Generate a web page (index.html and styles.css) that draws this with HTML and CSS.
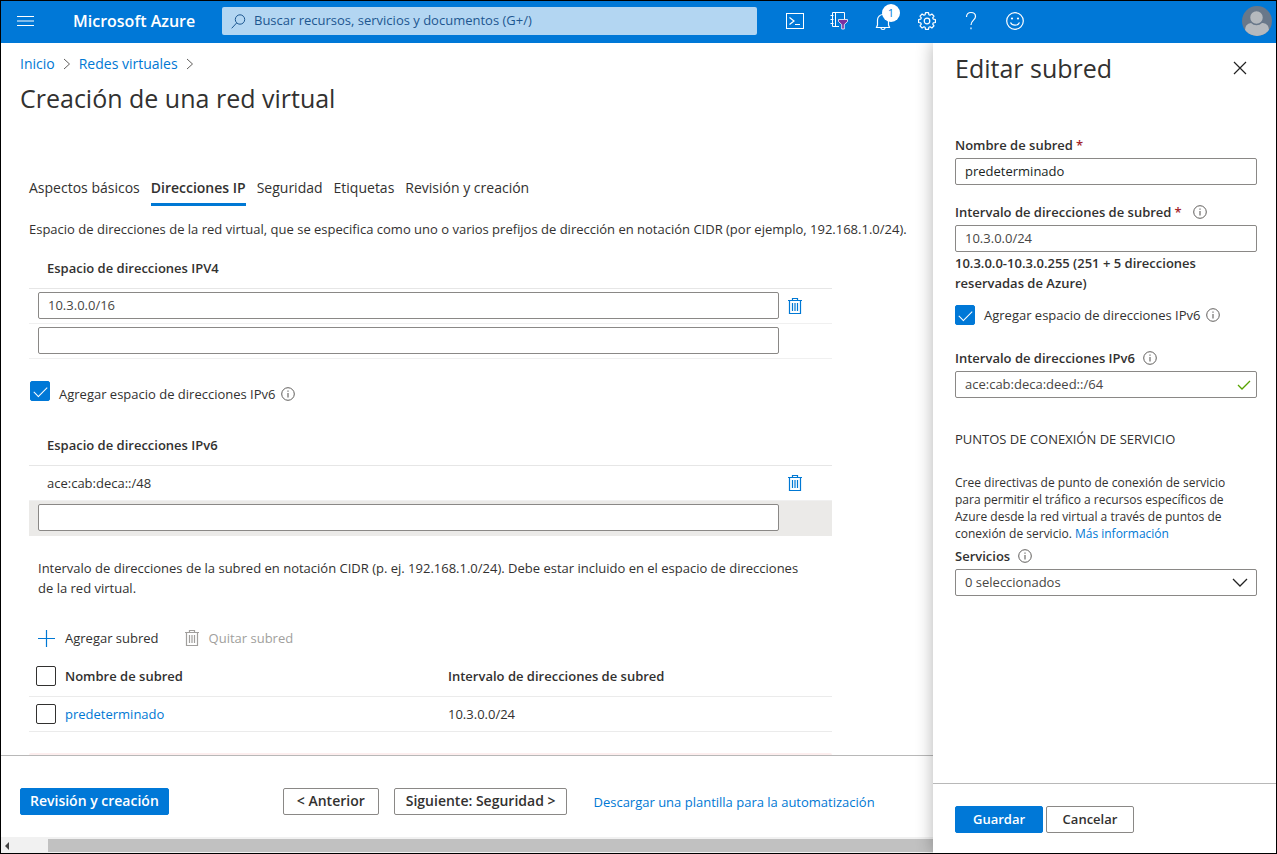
FILE: index.html
```html
<!DOCTYPE html>
<html lang="es">
<head>
<meta charset="utf-8">
<meta name="viewport" content="width=device-width, initial-scale=1">
<title>Creación de una red virtual - Microsoft Azure</title>
<link rel="stylesheet" href="styles.css">
</head>
<body>
<svg class="sprite" aria-hidden="true">
  <symbol id="trash" viewBox="0 0 14 18">
    <path d="M0 3.5h14M4.5 3V1.5h5V3M1.5 4v12.500h11V4M4.500 6v8M7 6v8M9.500 6v8" fill="none" stroke="currentColor" stroke-width="1.200"/>
  </symbol>
  <symbol id="info" viewBox="0 0 14 14">
    <circle cx="7" cy="7" r="6.300" fill="none" stroke="currentColor" stroke-width="1"/>
    <path d="M7 6v4.500M7 3.500v1.300" fill="none" stroke="currentColor" stroke-width="1.100"/>
  </symbol>
  <symbol id="chevron" viewBox="0 0 8 12">
    <path d="M1 1l5.500 5L1 11" fill="none" stroke="currentColor" stroke-width="1"/>
  </symbol>
</svg>

<header class="topbar">
  <button class="icon-btn menu-btn" type="button" aria-label="Menú">
    <svg width="17" height="12" viewBox="0 0 17 12"><path d="M0 1.500h17M0 6h17M0 10.500h17" stroke="#fff" fill="none"/></svg>
  </button>
  <a class="brand" href="#">Microsoft Azure</a>
  <div class="search">
    <svg width="15" height="15" viewBox="0 0 15 15"><circle cx="9" cy="5.500" r="4.700" fill="none" stroke="#1d5790"/><path d="M5.600 9L.7 14.300" stroke="#1d5790"/></svg>
    <input class="search-input" type="search" aria-label="Buscar" placeholder="Buscar recursos, servicios y documentos (G+/)">
  </div>
  <nav class="tools" aria-label="Herramientas">
    <button class="icon-btn" type="button" aria-label="Cloud Shell">
      <svg width="20" height="18" viewBox="0 0 20 18"><rect x="1.500" y="1.500" width="17" height="15" fill="none" stroke="#fff"/><path d="M4.500 5.500l4.500 3.500-4.500 3.500M10 12.500h5" fill="none" stroke="#fff" stroke-width="1.200"/></svg>
    </button>
    <button class="icon-btn" type="button" aria-label="Directorios">
      <svg width="20" height="20" viewBox="0 0 20 20"><path d="M10 15.500H3.500v-14h12V8M6.500 1.500v14M1.500 4.500h3M1.500 8.500h3M1.500 12.500h3" fill="none" stroke="#fff"/><path d="M9.500 8.500h9v2l-3.200 3v4.500h-2.600v-4.500l-3.200-3z" fill="#7b2fa0" stroke="#fff" stroke-width=".8"/></svg>
    </button>
    <button class="icon-btn" type="button" aria-label="Notificaciones">
      <svg width="18" height="20" viewBox="0 0 18 20"><path d="M3.500 14.500V9a5.500 5.500 0 0 1 11 0v5.500M3.500 14l-1 2.500h13l-1-2.500M7 17a2 1.500 0 0 0 4 0" fill="none" stroke="#fff" stroke-width="1.200"/></svg>
      <span class="badge">1</span>
    </button>
    <button class="icon-btn" type="button" aria-label="Configuración">
      <svg width="20" height="20" viewBox="0 0 20 20"><path d="M8.100 3.800L8.500 1.600h3l.4 2.200 1.140.470L14.880 3 17 5.120l-1.270 1.840.470 1.140 2.200.4v3l-2.200.4-.470 1.140L17 14.880 14.880 17l-1.840-1.270-1.140.470-.4 2.200h-3l-.4-2.200-1.140-.470L5.120 17 3 14.880l1.270-1.840-.470-1.140-2.200-.4v-3l2.200-.4.470-1.140L3 5.120 5.120 3l1.840 1.270z" fill="none" stroke="#fff" stroke-width="1.200" stroke-linejoin="round"/><circle cx="10" cy="10" r="2.800" fill="none" stroke="#fff" stroke-width="1.200"/></svg>
    </button>
    <button class="icon-btn" type="button" aria-label="Ayuda">
      <svg width="12" height="20" viewBox="0 0 12 20"><path d="M1.500 6C1.500 3 3.300 1.500 6 1.500S10.500 3 10.500 5.500c0 3.500-4.500 4-4.500 8.500M6 16.500v1.800" fill="none" stroke="#fff" stroke-width="1.200"/></svg>
    </button>
    <button class="icon-btn" type="button" aria-label="Comentarios">
      <svg width="20" height="20" viewBox="0 0 20 20"><circle cx="10" cy="10" r="8.300" fill="none" stroke="#fff" stroke-width="1.200"/><circle cx="7" cy="7.500" r="1.100" fill="#fff"/><circle cx="13" cy="7.500" r="1.100" fill="#fff"/><path d="M5.500 11.500c1.500 3.600 7.500 3.600 9 0" fill="none" stroke="#fff" stroke-width="1.200"/></svg>
    </button>
  </nav>
  <button class="icon-btn avatar" type="button" aria-label="Cuenta">
    <svg width="30" height="30" viewBox="0 0 30 30"><defs><clipPath id="disc"><circle cx="15" cy="15" r="15"/></clipPath></defs><g clip-path="url(#disc)"><rect width="30" height="30" fill="#69788a"/><path d="M3 30v-6q0-6 6-7h12q6 1 6 7v6z" fill="#b5b9be"/><circle cx="14.500" cy="11.500" r="7" fill="#b5b9be" stroke="#69788a" stroke-width="1.500"/></g></svg>
  </button>
</header>

<div class="workspace">
  <main class="page">
    <div class="page-scroll">
      <nav class="crumbs" aria-label="Ruta">
        <a href="#">Inicio</a><svg width="8" height="12"><use href="#chevron"/></svg>
        <a href="#">Redes virtuales</a><svg width="8" height="12"><use href="#chevron"/></svg>
      </nav>
      <h1 class="title">Creación de una red virtual</h1>

      <div class="content">
        <nav class="tabs" aria-label="Pasos">
          <a class="tab" href="#">Aspectos básicos</a>
          <a class="tab active" href="#" aria-current="step">Direcciones IP</a>
          <a class="tab" href="#">Seguridad</a>
          <a class="tab" href="#">Etiquetas</a>
          <a class="tab" href="#">Revisión y creación</a>
        </nav>
        <p class="intro">Espacio de direcciones de la red virtual, que se especifica como uno o varios prefijos de dirección en notación CIDR (por ejemplo, 192.168.1.0/24).</p>

        <section class="space">
          <h2 class="space-head">Espacio de direcciones IPV4</h2>
          <div class="space-row">
            <input class="field" type="text" value="10.3.0.0/16" aria-label="Espacio de direcciones IPV4">
            <button class="icon-btn remove" type="button" aria-label="Eliminar"><svg width="14" height="18"><use href="#trash"/></svg></button>
          </div>
          <div class="space-row">
            <input class="field" type="text" aria-label="Nuevo espacio de direcciones IPV4">
          </div>
        </section>

        <div class="check-line">
          <input class="check" type="checkbox" id="add-v6" checked>
          <label for="add-v6">Agregar espacio de direcciones IPv6</label>
          <svg class="info" width="14" height="14"><use href="#info"/></svg>
        </div>

        <section class="space">
          <h2 class="space-head">Espacio de direcciones IPv6</h2>
          <div class="space-row">
            <span class="space-value">ace:cab:deca::/48</span>
            <button class="icon-btn remove" type="button" aria-label="Eliminar"><svg width="14" height="18"><use href="#trash"/></svg></button>
          </div>
          <div class="space-row shaded">
            <input class="field" type="text" aria-label="Nuevo espacio de direcciones IPv6">
          </div>
        </section>

        <p class="hint">Intervalo de direcciones de la subred en notación CIDR (p. ej. 192.168.1.0/24). Debe estar incluido en el espacio de direcciones de la red virtual.</p>

        <div class="commands">
          <button class="command" type="button"><svg class="plus" width="17" height="17" viewBox="0 0 17 17"><path d="M8.500 0v17M0 8.500h17" stroke="#0078d4" stroke-width="1.200"/></svg>Agregar subred</button>
          <button class="command" type="button" disabled><svg width="14" height="18"><use href="#trash"/></svg>Quitar subred</button>
        </div>

        <table class="subnets">
          <thead>
            <tr>
              <th class="pick"><input class="check" type="checkbox" aria-label="Seleccionar todo"></th>
              <th class="name">Nombre de subred</th>
              <th>Intervalo de direcciones de subred</th>
            </tr>
          </thead>
          <tbody>
            <tr>
              <td class="pick"><input class="check" type="checkbox" aria-label="Seleccionar predeterminado"></td>
              <td class="name"><a href="#">predeterminado</a></td>
              <td>10.3.0.0/24</td>
            </tr>
          </tbody>
        </table>
        <div class="alert"></div>
      </div>
    </div>

    <footer class="page-foot">
      <button class="btn primary review" type="button">Revisión y creación</button>
      <button class="btn prev" type="button">&lt; Anterior</button>
      <button class="btn next" type="button">Siguiente: Seguridad &gt;</button>
      <a class="template" href="#">Descargar una plantilla para la automatización</a>
    </footer>
    <div class="hscroll" aria-hidden="true">
      <svg width="6" height="8" viewBox="0 0 6 8"><path d="M5 0v8L1 4z" fill="#404040"/></svg>
      <div class="thumb"></div>
    </div>
  </main>

  <aside class="panel" aria-labelledby="panel-title">
    <div class="panel-body">
      <div class="panel-head">
        <h2 class="title" id="panel-title">Editar subred</h2>
        <button class="icon-btn" type="button" aria-label="Cerrar"><svg width="14" height="14" viewBox="0 0 14 14"><path d="M1 1l12 12M13 1L1 13" stroke="#222" stroke-width="1.200"/></svg></button>
      </div>

      <div class="group">
        <div class="label-line"><label for="sn-name">Nombre de subred</label><span class="req">*</span></div>
        <input class="field strong" id="sn-name" type="text" value="predeterminado">
      </div>

      <div class="group range">
        <div class="label-line"><label for="sn-range">Intervalo de direcciones de subred</label><span class="req">*</span><svg class="info" width="14" height="14"><use href="#info"/></svg></div>
        <input class="field" id="sn-range" type="text" value="10.3.0.0/24">
        <p class="summary">10.3.0.0-10.3.0.255 (251 + 5 direcciones reservadas de Azure)</p>
      </div>

      <div class="check-line">
        <input class="check" type="checkbox" id="sn-v6" checked>
        <label for="sn-v6">Agregar espacio de direcciones IPv6</label>
        <svg class="info" width="14" height="14"><use href="#info"/></svg>
      </div>

      <div class="group v6">
        <div class="label-line"><label for="sn-range6">Intervalo de direcciones IPv6</label><svg class="info" width="14" height="14"><use href="#info"/></svg></div>
        <div class="adorned">
          <input class="field" id="sn-range6" type="text" value="ace:cab:deca:deed::/64">
          <svg class="adornment" width="14" height="10" viewBox="0 0 14 10"><path d="M1 5l4 4 8-8" fill="none" stroke="#57a300" stroke-width="1.300"/></svg>
        </div>
      </div>

      <h3 class="caps">PUNTOS DE CONEXIÓN DE SERVICIO</h3>
      <p class="about">Cree directivas de punto de conexión de servicio para permitir el tráfico a recursos específicos de Azure desde la red virtual a través de puntos de conexión de servicio. <a href="#">Más información</a></p>

      <div class="group services">
        <div class="label-line"><label for="sn-serv">Servicios</label><svg class="info" width="14" height="14"><use href="#info"/></svg></div>
        <div class="adorned">
          <select class="field" id="sn-serv"><option>0 seleccionados</option></select>
          <svg class="adornment" width="16" height="10" viewBox="0 0 16 10"><path d="M1 1l7 7 7-7" fill="none" stroke="#222" stroke-width="1.300"/></svg>
        </div>
      </div>
    </div>
    <footer class="panel-foot">
      <button class="btn primary" type="button">Guardar</button>
      <button class="btn" type="button">Cancelar</button>
    </footer>
  </aside>
</div>
</body>
</html>
```
FILE: styles.css
```css
* {
  box-sizing: border-box;
}

body {
  margin: 0;
  height: 100vh;
  display: flex;
  flex-direction: column;
  border: 1px solid #000;
  background: #fff;
  color: #323130;
  font: 13px/20px "Open Sans", "Noto Sans", sans-serif;
  overflow: hidden;
}

h1, h2, h3, p {
  margin: 0;
}

a {
  color: #0078d4;
  text-decoration: none;
}

button, input, select {
  font: inherit;
  color: inherit;
}

svg {
  display: block;
  flex: none;
}

.sprite {
  position: absolute;
  width: 0;
  height: 0;
}

.icon-btn {
  display: flex;
  align-items: center;
  justify-content: center;
  padding: 0;
  border: 0;
  background: none;
}

/* Top bar */
.topbar {
  display: flex;
  align-items: center;
  flex: none;
  height: 42px;
  padding: 0 4px 2px 16px;
  background: #0078d7;
  color: #fff;
}

.menu-btn {
  width: 17px;
  height: 20px;
}

.brand {
  width: 149px;
  margin-left: 39px;
  color: #fff;
  font-size: 16px;
  font-weight: 600;
  white-space: nowrap;
}

.search {
  display: flex;
  align-items: center;
  gap: 8px;
  flex: 0 1 535px;
  height: 28px;
  padding-left: 9px;
  border-radius: 2px;
  background: #b3d6f2;
}

.search-input {
  flex: 1;
  padding: 0 0 2px;
  border: 0;
  outline: 0;
  background: none;
}

.search-input::placeholder {
  color: #1d5790;
  opacity: 1;
}

.tools {
  display: flex;
  margin-left: 16px;
}

.tools .icon-btn {
  position: relative;
  width: 44px;
  height: 40px;
}

.badge {
  position: absolute;
  top: 3px;
  right: 5px;
  width: 18px;
  height: 18px;
  border-radius: 9px;
  background: #fff;
  color: #0078d7;
  font-size: 11px;
  line-height: 17px;
  text-align: center;
}

.avatar {
  margin-left: auto;
}

/* Page */
.workspace {
  display: flex;
  flex: 1;
  min-height: 0;
}

.page {
  display: flex;
  flex-direction: column;
  flex: 1;
  min-width: 0;
}

.page-scroll {
  flex: 1;
  min-height: 0;
  overflow: hidden;
  padding-top: 11px;
}

.crumbs {
  display: flex;
  align-items: center;
  gap: 8px;
  padding-left: 19px;
  font-size: 14px;
  color: #605e5c;
}

.title {
  font-size: 25px;
  line-height: 32px;
  font-weight: 500;
}

h1.title {
  margin: 8px 0 0 19px;
}

.content {
  max-width: 831px;
  padding-left: 28px;
  margin-top: 64px;
}

.tabs {
  display: flex;
  gap: 11px;
  font-size: 14px;
}

.tab {
  padding-bottom: 5px;
  border-bottom: 3px solid transparent;
  color: #323130;
  white-space: nowrap;
}

.tab.active {
  border-color: #0078d4;
  font-weight: 600;
}

.intro {
  margin-top: 13px;
  white-space: nowrap;
}

.space-head {
  padding: 0 0 10px 18px;
  border-bottom: 1px solid #e6e6e6;
  font-size: 13px;
  line-height: 20px;
  font-weight: 600;
}

.intro + .space {
  margin-top: 19px;
}

.space-row {
  display: grid;
  grid-template-columns: 1fr 32px;
  align-items: center;
  height: 35px;
  padding: 0 21px 1px 9px;
  border-bottom: 1px solid #f0f0f0;
}

.shaded {
  border-color: #ebeae8;
  background: #ebeae8;
}

.space-value {
  padding-left: 9px;
}

.field {
  display: block;
  width: 100%;
  height: 27px;
  padding: 0 9px 2px;
  border: 1px solid #8a8886;
  border-radius: 2px;
  background: #fff;
  outline: 0;
  color: #484644;
}

.field.strong {
  color: #201f1e;
}

.remove {
  color: #0078d4;
}

.check-line {
  display: flex;
  align-items: center;
}

.check-line label {
  margin: 0 5px 0 9px;
}

.content .check-line {
  align-items: flex-end;
  margin: 22px 0 31px 1px;
}

.content .check-line .check,
.content .check-line .info {
  margin-bottom: 3px;
}

.check {
  appearance: none;
  flex: none;
  display: block;
  width: 20px;
  height: 20px;
  margin: 0;
  border: 1px solid #323130;
  border-radius: 2px;
  background: #fff;
}

.check:checked {
  display: grid;
  place-items: center;
  border-color: #0078d7;
  background: #0078d7;
}

.check:checked::before {
  content: "";
  width: 12px;
  height: 6px;
  border: solid #fff;
  border-width: 0 0 1px 1px;
  transform: rotate(-45deg) translate(1px, -1px);
}

.info {
  color: #605e5c;
}

.hint {
  margin-top: 22px;
  padding: 0 18px 0 9px;
}

.commands {
  display: flex;
  gap: 26px;
  margin-top: 30px;
  padding-left: 9px;
}

.command {
  display: flex;
  align-items: center;
  gap: 10px;
  padding: 0;
  border: 0;
  background: none;
}

.command:disabled {
  color: #a19f9d;
}

.subnets {
  width: 100%;
  margin-top: 8px;
  border-collapse: collapse;
  table-layout: fixed;
  text-align: left;
}

.subnets th,
.subnets td {
  height: 35px;
  padding: 0;
  border-bottom: 1px solid #ebebeb;
}

.subnets th {
  height: 40px;
  font-weight: 600;
}

.subnets .pick {
  width: 36px;
  padding-left: 7px;
}

.subnets .name {
  width: 383px;
}

.alert {
  height: 40px;
  margin-top: 21px;
  border-radius: 2px;
  background: #fdeeee;
}

.btn {
  height: 27px;
  padding: 0 11px 2px;
  border: 1px solid #8a8886;
  border-radius: 2px;
  background: #fff;
  font-weight: 600;
  white-space: nowrap;
}

.btn.primary {
  border-color: #0078d7;
  background: #0078d7;
  color: #fff;
}

.page-foot {
  display: flex;
  align-items: center;
  flex: none;
  height: 82px;
  padding: 10px 0 0 19px;
  border-top: 1px solid #b8b8b8;
}

.page-foot .btn {
  font-size: 14px;
}

.page-foot .review {
  margin-right: 114px;
  padding: 0 9px 2px;
}

.page-foot .prev {
  padding: 0 13px 2px;
}

.next {
  margin: 0 26px 0 15px;
}

.template {
  white-space: nowrap;
}

.hscroll {
  display: flex;
  align-items: center;
  flex: none;
  gap: 38px;
  height: 16px;
  padding: 1px 0 0 3px;
  background: #f1f1f1;
}

.thumb {
  flex: 1;
  height: 13px;
  background: #c1c1c1;
}

/* Side panel */
.panel {
  display: flex;
  flex-direction: column;
  flex: 0 0 343px;
  position: relative;
  background: #fff;
  box-shadow: 0 0 16px rgba(0, 0, 0, 0.3);
  clip-path: inset(0 0 0 -20px);
}

.panel-body {
  flex: 1;
  min-height: 0;
  padding: 9px 19px 0 22px;
}

.panel-head {
  display: flex;
  align-items: center;
  justify-content: space-between;
  padding-right: 10px;
}

.group {
  margin-top: 15px;
}

.panel-head + .group {
  margin-top: 51px;
}

.label-line {
  display: flex;
  align-items: center;
  height: 20px;
  margin-bottom: 3px;
  font-weight: 600;
}

.label-line .info {
  margin-left: 8px;
}

.label-line .req {
  margin-left: 3px;
  color: #a4262c;
}

.req + .info {
  margin-left: 11px;
}

.group.range {
  margin-top: 17px;
}

.summary {
  margin-top: 1px;
  font-weight: 600;
}

.panel .check-line {
  margin-top: 12px;
}

.group.v6 {
  margin-top: 23px;
}

.adorned {
  display: grid;
  align-items: center;
}

.adorned > * {
  grid-area: 1 / 1;
}

.adornment {
  justify-self: end;
  margin-right: 6px;
  pointer-events: none;
}

select.field {
  appearance: none;
}

select + .adornment {
  margin-right: 9px;
}

.caps {
  margin-top: 31px;
  font-size: 13px;
  line-height: 20px;
  font-weight: 500;
}

.about {
  margin-top: 25px;
  padding-right: 20px;
  font-size: 12px;
  line-height: 17px;
}

.group.services {
  margin-top: 4px;
}

.panel-foot {
  display: flex;
  flex: none;
  gap: 3px;
  height: 70px;
  padding: 22px;
  border-top: 1px solid #b8b8b8;
}

.panel-foot .btn {
  min-width: 88px;
}
```
